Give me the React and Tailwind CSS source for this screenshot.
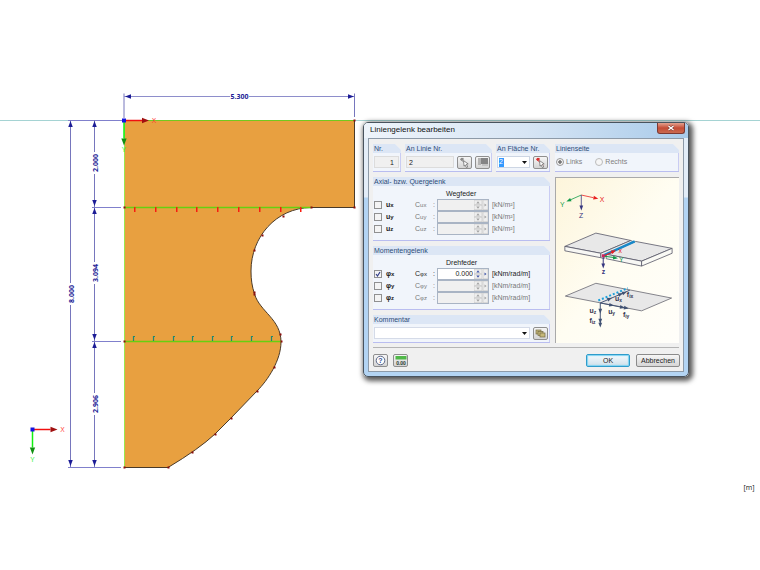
import { useState } from 'react';

const NAVY = '#1c1c96';

const redTicks = [134, 155, 176, 196, 217, 238, 259, 280, 300];
const tealTicks = [133, 153, 173, 192, 212, 231, 251, 271];
const nodes = [
  [354, 120], [354, 207], [124, 207], [311, 207], [283, 216], [262, 235], [254, 250],
  [254, 292], [254, 294], [280, 334], [281, 341], [124, 341], [274, 367], [257, 391],
  [231, 418], [215, 434], [192, 452], [168, 467], [124, 467],
];

const Arrow = ({ x, y, angle = 0, color = NAVY, size = 6 }) => (
  <polygon
    points={`0,0 ${-size},${-size * 0.38} ${-size},${size * 0.38}`}
    transform={`translate(${x} ${y}) rotate(${angle})`}
    fill={color}
  />
);

const VerticalDim = ({ x, from, to, label, at }) => (
  <g>
    <path d={`M${x} ${from}V${at - 11}M${x} ${at + 11}V${to}`} stroke="#7676bd" />
    <Arrow x={x} y={from + 1} angle={-90} />
    <Arrow x={x} y={to - 1} angle={90} />
    <text transform={`translate(${x + 3} ${at}) rotate(-90)`} textAnchor="middle" fill={NAVY} fontSize="7" fontWeight="bold">{label}</text>
  </g>
);

const Axes = ({ x, y, yLabel }) => (
  <g>
    <path d={`M${x} ${y}h18`} stroke="#f01010" strokeWidth="1.5" />
    <path d={`M${x} ${y}v18`} stroke="#10f010" strokeWidth="1.5" />
    <Arrow x={x + 25} y={y} color="#a01010" size={7} />
    <Arrow x={x} y={y + 25} angle={90} color="#109010" size={7} />
    <rect x={x - 2} y={y - 2} width="4" height="4" fill="#1414e0" />
    <text x={x + 30} y={y + 2.5} textAnchor="middle" fill="#ff3030" fontSize="7">X</text>
    <text x={x} y={y + yLabel} textAnchor="middle" fill="#20f020" fontSize="7">Y</text>
  </g>
);

const Model = () => (
  <svg viewBox="0 0 760 570" preserveAspectRatio="xMinYMin meet" className="absolute inset-0 h-full w-full font-['Open_Sans','Liberation_Sans',sans-serif]" fill="none">
    <path d="M0 120.5H760" stroke="#a5d3d3" />
    <path
      d="M124 120.500H354.500V207.500H311C276 208 251 237 251 271C251 280 252 286 254.500 294C260 312 281 319 281 342C281 360 268 380 257 391L231 418L215 434Q199 449 168 467.500H124Z"
      fill="#e8a040"
    />
    <path
      d="M354.500 120V207.500H311C276 208 251 237 251 271C251 280 252 286 254.500 294C260 312 281 319 281 342C281 360 268 380 257 391L231 418L215 434Q199 449 168 467.500H124"
      stroke="#4a3a28"
    />
    <path d="M124 120.500H354" stroke="#74c81e" />
    <path d="M124 207.500H311M124 341.500H281" stroke="#66d010" strokeWidth="1.3" />
    <path d="M124.500 120V467" stroke="#98e850" />
    {redTicks.map((x) => <rect key={x} x={x} y="207" width="1.5" height="5" fill="#f81c10" />)}
    {tealTicks.map((x) => <path key={x} d={`M${x + 0.5} 341V336.500h1.500`} stroke="#23876f" strokeWidth="1.2" />)}
    {nodes.map(([x, y]) => <rect key={`${x}-${y}`} x={x - 0.5} y={y - 0.5} width="2" height="2" fill="#8c0c0c" />)}

    {/* dimension lines */}
    <path d="M124 93.500V118M354.500 93.500V117" stroke="#7676bd" />
    <path d="M124 96.500H230M249 96.500H354" stroke="#8e8ecb" />
    <Arrow x={125} y={96.5} angle={180} />
    <Arrow x={354} y={96.5} />
    <text x="239.500" y="99" textAnchor="middle" fill={NAVY} fontSize="7" fontWeight="bold">5.300</text>
    <path d="M68 120.500H122M92 207.500H121M92 341.500H121M68 467.500H121" stroke="#8080cc" />
    <VerticalDim x={70.5} from={120} to={467} label="8.000" at={294} />
    <VerticalDim x={94.5} from={120} to={207} label="2.000" at={163} />
    <VerticalDim x={94.5} from={207} to={341} label="3.094" at={273} />
    <VerticalDim x={94.5} from={341} to={467} label="2.906" at={404} />

    <Axes x={124} y={120.5} yLabel={31} />
    <Axes x={32.5} y={429.5} yLabel={32} />
    <text x="749" y="490" textAnchor="middle" fill="#111" fontSize="7">[m]</text>
  </svg>
);

const Group = ({ title, className = '', children }) => (
  <fieldset className={`min-w-0 border-b border-[#b9bdf0] bg-[#f1f5fb] [clip-path:polygon(0_0,calc(100%-6px)_0,100%_6px,100%_100%,0_100%)] ${className}`}>
    <legend className="float-left h-[9px] w-full bg-[#dce6f5] pl-px leading-[9px] whitespace-nowrap text-[#2c4c78]">{title}</legend>
    <div className="clear-both border-r border-[#c9ccf3]">{children}</div>
  </fieldset>
);

const ToolButton = ({ label, children, className = '' }) => (
  <button type="button" aria-label={label} className={`flex h-[13px] w-[15px] shrink-0 items-center justify-center rounded-[2px] border border-[#8f8f8f] bg-linear-to-b from-[#f6f6f6] to-[#d4d4d4] ${className}`}>
    {children}
  </button>
);

const PickIcon = ({ color = '#8a8a8a' }) => (
  <svg viewBox="0 0 12 12" className="h-[11px] w-[11px]" fill="none">
    <path d="M1 2L9 9" stroke={color} />
    <rect x="2" y="1" width="3" height="3" fill={color} />
    <path d="M5 4L10 7.500L8 8L9.500 11L8 11.500L6.800 8.800L5.500 10Z" fill="#fff" stroke="#666" strokeWidth="0.8" />
  </svg>
);

const DropArrow = () => (
  <svg viewBox="0 0 5 3" className="pointer-events-none absolute top-[5px] right-[3px] h-[3px] w-[5px]">
    <path d="M0 0H5L2.500 3Z" fill="#111" />
  </svg>
);

const Spinner = ({ active }) => (
  <span aria-hidden="true" className="flex">
    <svg viewBox="0 0 14 10" className="h-[10px] w-[14px]">
      <rect x="0" y="0" width="8" height="4.600" fill="#eee" stroke="#c4c4c4" strokeWidth="0.6" />
      <rect x="0" y="5.200" width="8" height="4.600" fill="#eee" stroke="#c4c4c4" strokeWidth="0.6" />
      <rect x="9" y="0" width="5" height="9.800" fill="#eee" stroke="#c4c4c4" strokeWidth="0.6" />
      <path d="M2.300 3.500L4 1.300L5.700 3.500ZM2.300 6.500L4 8.700L5.700 6.500ZM10.500 3.500L12.500 5L10.500 6.500Z" fill={active ? '#4257a8' : '#a2a2a2'} />
    </svg>
  </span>
);

const SpringRow = ({ symbol, axis, unit, value, square }) => {
  const [on, setOn] = useState(value !== undefined);
  const id = `${symbol === 'u' ? 'u' : 'phi'}-${axis}`;
  const tone = on ? 'text-[#222]' : 'text-[#777]';
  return (
    <div className="grid h-3 grid-cols-[12px_29px_18px_4px_52px_1fr] items-center leading-[10px]">
      <span className="relative h-2 w-2">
        <input
          id={id}
          type="checkbox"
          checked={on}
          onChange={(e) => setOn(e.target.checked)}
          className="block h-2 w-2 appearance-none border border-[#909090] bg-[#f4f4f4]"
        />
        {on && (
          <svg viewBox="0 0 8 8" className="pointer-events-none absolute inset-0 h-2 w-2" fill="none">
            <path d="M2 4L3.500 6L6 2" stroke="#333e88" strokeWidth="1.2" />
          </svg>
        )}
      </span>
      <label htmlFor={id} className="font-bold text-[#222]">{symbol}<span className="text-[6px]">{axis}</span></label>
      <label htmlFor={`${id}-value`} className={tone}>C<span className="text-[6px]">{symbol}{axis}</span></label>
      <span className={tone}>:</span>
      <span className={`flex h-3 items-center border border-[#a9b4c4] ${on ? 'bg-white' : 'bg-[#f0f0f0]'}`}>
        <input id={`${id}-value`} defaultValue={value} disabled={!on} className="h-[10px] w-0 min-w-0 flex-1 bg-transparent pr-px text-right leading-[10px] text-[#222] outline-none" />
        <Spinner active={on} />
      </span>
      <span className={`pl-[3px] whitespace-nowrap ${tone}`}>[{unit}{square && '²'}]</span>
    </div>
  );
};

const Preview = () => (
  <svg viewBox="0 0 125 166" preserveAspectRatio="xMinYMin meet" className="h-[165px] w-full" fill="none" fontFamily="Liberation Sans, sans-serif">
    <path d="M25.700 17.300L38 20" stroke="#e82020" strokeWidth="0.8" />
    <Arrow x={43} y={21} angle={12} color="#e82020" size={5} />
    <path d="M25.700 17.300L14 22.500" stroke="#119a48" strokeWidth="0.8" />
    <Arrow x={10.5} y={24} angle={156} color="#119a48" size={5} />
    <path d="M25.700 17.300V29" stroke="#36367f" strokeWidth="0.8" />
    <Arrow x={25.7} y={33} angle={90} color="#36367f" size={5} />
    <text x="44.500" y="24.500" fontSize="7" fill="#e82020">X</text>
    <text x="4" y="29.500" fontSize="7" fill="#119a48">Y</text>
    <text x="23.500" y="40.500" fontSize="7" fill="#36367f">Z</text>

    {/* slab with hinge line */}
    <g stroke="#555566" strokeWidth="0.8" strokeLinejoin="round">
      <path d="M9 69.500L40.500 56L76 63.500L45.500 76.500Z" fill="#e8e8e8" />
      <path d="M9 69.500L45.500 76.500V81L9 74Z" fill="#f7f7f4" />
      <path d="M45.500 76.500L76 63.500L79 65L49 78V82L45.500 81Z" fill="#ececea" />
      <path d="M51 77.500L81 64.500L118 71.500L87 84.500Z" fill="#e8e8e8" />
      <path d="M51 77.500L87 84.500V89.500L51 82Z" fill="#f7f7f4" />
      <path d="M87 84.500L118 71.500V76.500L87 89.500Z" fill="#fafaf5" />
    </g>
    <path d="M49 78.500L80 64.500" stroke="#1788c9" strokeWidth="2.500" />
    <path d="M48 79.500L57 75.500" stroke="#e82020" strokeWidth="1.200" />
    <Arrow x={61} y={73.5} angle={-24} color="#e82020" size={5} />
    <path d="M49 79.500L59 80.800" stroke="#119a48" strokeWidth="1.200" />
    <Arrow x={63} y={81.5} angle={7} color="#119a48" size={5} />
    <path d="M48 79V88" stroke="#36367f" />
    <Arrow x={48} y={92} angle={90} color="#36367f" size={5} />
    <rect x="46.500" y="77.500" width="3" height="3" fill="#cc2460" />
    <text x="63.500" y="76" fontSize="7" fill="#e82020">x</text>
    <text x="64" y="85" fontSize="7" fill="#119a48">Y</text>
    <text x="46.500" y="98" fontSize="7" fill="#36367f" fontWeight="bold">z</text>

    {/* displacements and forces */}
    <path d="M9.500 120L40.500 107L117.500 122L87 135Z" fill="#e8e8e8" stroke="#666670" strokeWidth="0.8" />
    <path d="M43 124.500L73 112" stroke="#1aa0dc" strokeWidth="2" strokeDasharray="2 2" />
    <path d="M45 127L75 114M45 127L70 132M45 127V150" stroke="#415273" />
    <Arrow x={57} y={121.8} angle={-23} color="#415273" size={5} />
    <Arrow x={68} y={117} angle={-23} color="#415273" size={5} />
    <Arrow x={72} y={115.5} angle={-23} color="#415273" size={5} />
    <Arrow x={59} y={129.8} angle={11} color="#415273" size={5} />
    <Arrow x={70} y={132} angle={11} color="#415273" size={5} />
    <Arrow x={74} y={132.7} angle={11} color="#415273" size={5} />
    <Arrow x={45} y={138} angle={90} color="#415273" size={5} />
    <Arrow x={45} y={148} angle={90} color="#415273" size={5} />
    <Arrow x={45} y={152} angle={90} color="#415273" size={5} />
    <g fill="#33334d" fontSize="7" fontWeight="bold">
      <text x="60" y="125">u<tspan fontSize="5" dy="1">x</tspan></text>
      <text x="72" y="121">f<tspan fontSize="5" dy="1">ix</tspan></text>
      <text x="53" y="138">u<tspan fontSize="5" dy="1">y</tspan></text>
      <text x="68" y="141">f<tspan fontSize="5" dy="1">iy</tspan></text>
      <text x="34" y="137">u<tspan fontSize="5" dy="1">z</tspan></text>
      <text x="34" y="147">f<tspan fontSize="5" dy="1">iz</tspan></text>
    </g>
  </svg>
);

const HingeDialog = () => (
  <div role="dialog" aria-label="Liniengelenk bearbeiten" className="absolute top-[122px] left-[363px] w-[326px] rounded-[5px] border border-[#48535e] bg-[linear-gradient(#e3edf8_0,#e3edf8_74px,#b3d4f3_75px,#b3d4f3_100%)] px-1 pb-1 shadow-[2px_2px_5px_2px_rgba(0,0,0,0.65)]">
    <header className="-mx-1 flex h-[15px] items-start justify-between rounded-t-[4px] bg-linear-to-r from-[#eef4fb] via-[#d7e5f4] to-[#a9cbea] pl-1.5">
      <h1 className="text-[8px] leading-[14px] text-[#111]">Liniengelenk bearbeiten</h1>
      <button type="button" aria-label="Schließen" className="mr-[3px] flex h-[11px] w-7 items-center justify-center rounded-b-[3px] border border-t-0 border-[#7c3932] bg-linear-to-b from-[#e3a18f] via-[#c44b35] to-[#c96a50]">
        <svg viewBox="0 0 8 6" className="h-[6px] w-2">
          <path d="M1.500 1L6.500 5M6.500 1L1.500 5" stroke="#7d3b33" strokeWidth="2.400" />
          <path d="M1.500 1L6.500 5M6.500 1L1.500 5" stroke="#fff" strokeWidth="1.400" />
        </svg>
      </button>
    </header>

    <form className="border border-[#8d9aa8] bg-[#f0f0f0] px-1 pt-[5px] pb-1" onSubmit={(e) => e.preventDefault()}>
      <div className="grid grid-cols-[177px_1fr] gap-[5px]">
        <div className="flex gap-1">
          <Group title="Nr." className="w-7">
            <div className="flex h-[18px] items-center px-px">
              <input aria-label="Nr." readOnly value="1" className="h-3 w-full border border-[#dcdcdc] bg-[#f0f0f0] pr-1 text-right leading-[10px]" />
            </div>
          </Group>
          <Group title="An Linie Nr." className="flex-1">
            <div className="flex h-[18px] items-center gap-[3px] px-px">
              <input aria-label="An Linie Nr." readOnly value="2" className="h-3 w-0 min-w-0 flex-1 border border-[#dcdcdc] bg-[#f0f0f0] pl-[2px] leading-[10px]" />
              <ToolButton label="Linie wählen"><PickIcon /></ToolButton>
              <ToolButton label="Linien bearbeiten">
                <svg viewBox="0 0 12 10" className="h-[10px] w-3">
                  <rect x="1" y="1" width="3" height="7" fill="#b4b4b4" />
                  <rect x="5" y="4" width="6" height="5" fill="#c2c2c2" />
                  <rect x="4" y="1" width="7" height="6" fill="#858585" />
                </svg>
              </ToolButton>
            </div>
          </Group>
          <Group title="An Fläche Nr." className="w-[54px]">
            <div className="flex h-[18px] items-center gap-[3px] px-px">
              <span className="relative flex-1">
                <select aria-label="An Fläche Nr." className="block h-3 w-full appearance-none border border-[#cdd6e4] bg-white bg-[linear-gradient(#3399ff,#3399ff)] bg-[length:5px_9px] bg-[position:1px_center] bg-no-repeat pl-px leading-[10px] text-white">
                  <option>2</option>
                </select>
                <DropArrow />
              </span>
              <ToolButton label="Fläche wählen"><PickIcon color="#d83030" /></ToolButton>
            </div>
          </Group>
        </div>

        <Group title="Linienseite">
          <div className="flex h-[18px] items-center gap-[13px] pl-px text-[#808080]">
            <label className="flex items-center gap-[2px]">
              <input type="radio" name="side" defaultChecked disabled className="h-2 w-2 appearance-none rounded-full border border-[#999] bg-[radial-gradient(#777_35%,#f4f4f4_45%)]" />
              Links
            </label>
            <label className="flex items-center gap-[2px]">
              <input type="radio" name="side" disabled className="h-2 w-2 appearance-none rounded-full border border-[#bbb] bg-[#f6f6f6]" />
              Rechts
            </label>
          </div>
        </Group>

        <div className="flex flex-col gap-[5px]">
          <Group title="Axial- bzw. Quergelenk">
            <div className="px-px pt-[2px] pb-[5px]">
              <div className="h-[11px] pl-[72px] leading-[11px] text-[#222]">Wegfeder</div>
              <SpringRow symbol="u" axis="x" unit="kN/m" square />
              <SpringRow symbol="u" axis="y" unit="kN/m" square />
              <SpringRow symbol="u" axis="z" unit="kN/m" square />
            </div>
          </Group>
          <Group title="Momentengelenk">
            <div className="px-px pt-[2px] pb-[5px]">
              <div className="h-[11px] pl-[72px] leading-[11px] text-[#222]">Drehfeder</div>
              <SpringRow symbol="φ" axis="x" unit="kNm/rad/m" value="0.000" />
              <SpringRow symbol="φ" axis="y" unit="kNm/rad/m" />
              <SpringRow symbol="φ" axis="z" unit="kNm/rad/m" />
            </div>
          </Group>
          <Group title="Kommentar">
            <div className="flex h-[18px] items-center gap-[3px] px-px">
              <span className="relative flex-1">
                <select aria-label="Kommentar" className="block h-3 w-full appearance-none border border-[#d5dbe8] bg-white">
                  <option></option>
                </select>
                <DropArrow />
              </span>
              <ToolButton label="Kommentar übernehmen">
                <svg viewBox="0 0 11 9" className="h-[9px] w-[11px]" fill="#c6b878" stroke="#746b45" strokeWidth="0.7">
                  <rect x="1" y="1" width="5" height="4" />
                  <rect x="3" y="2.500" width="5" height="4" />
                  <rect x="5" y="4" width="5" height="4" />
                </svg>
              </ToolButton>
            </div>
          </Group>
        </div>

        <div className="border-t border-l border-[#a9a9a9] bg-linear-to-tl from-[#fffefa] via-[#fffdf2] to-[#fdf5db]">
          <Preview />
        </div>
      </div>

      <footer className="mt-1 flex items-center gap-[5px] border-t border-[#b4b4b4] pt-1.5">
        <ToolButton label="Hilfe">
          <svg viewBox="0 0 12 11" className="h-[11px] w-3">
            <circle cx="5.500" cy="5.500" r="4.300" fill="#fff" stroke="#5a6687" />
            <text x="5.500" y="8" textAnchor="middle" fontSize="7" fontWeight="bold" fill="#344e92">?</text>
          </svg>
        </ToolButton>
        <ToolButton label="Einheiten">
          <svg viewBox="0 0 12 10" className="h-[10px] w-3">
            <rect x="0.500" y="0" width="11" height="3.500" fill="#50b848" />
            <text x="6" y="8.500" textAnchor="middle" fontSize="5" fontWeight="bold" fill="#263a2c">0.00</text>
          </svg>
        </ToolButton>
        <button type="submit" className="ml-auto h-[13px] w-11 rounded-[2px] border border-[#2f9ccb] bg-linear-to-b from-[#f4fafd] to-[#cfe0ea] leading-[11px] shadow-[inset_0_0_1px_1px_#7fd3f2]">OK</button>
        <button type="button" className="-mr-px ml-px h-[13px] w-11 rounded-[2px] border border-[#8b8b8b] bg-linear-to-b from-[#f6f6f6] to-[#d6d6d6] leading-[11px]">Abbrechen</button>
      </footer>
    </form>
  </div>
);

export default function App() {
  return (
    <main className="relative min-h-screen overflow-hidden bg-white font-['Liberation_Sans',Arial,sans-serif] text-[7px] text-[#222]">
      <Model />
      <HingeDialog />
    </main>
  );
}
